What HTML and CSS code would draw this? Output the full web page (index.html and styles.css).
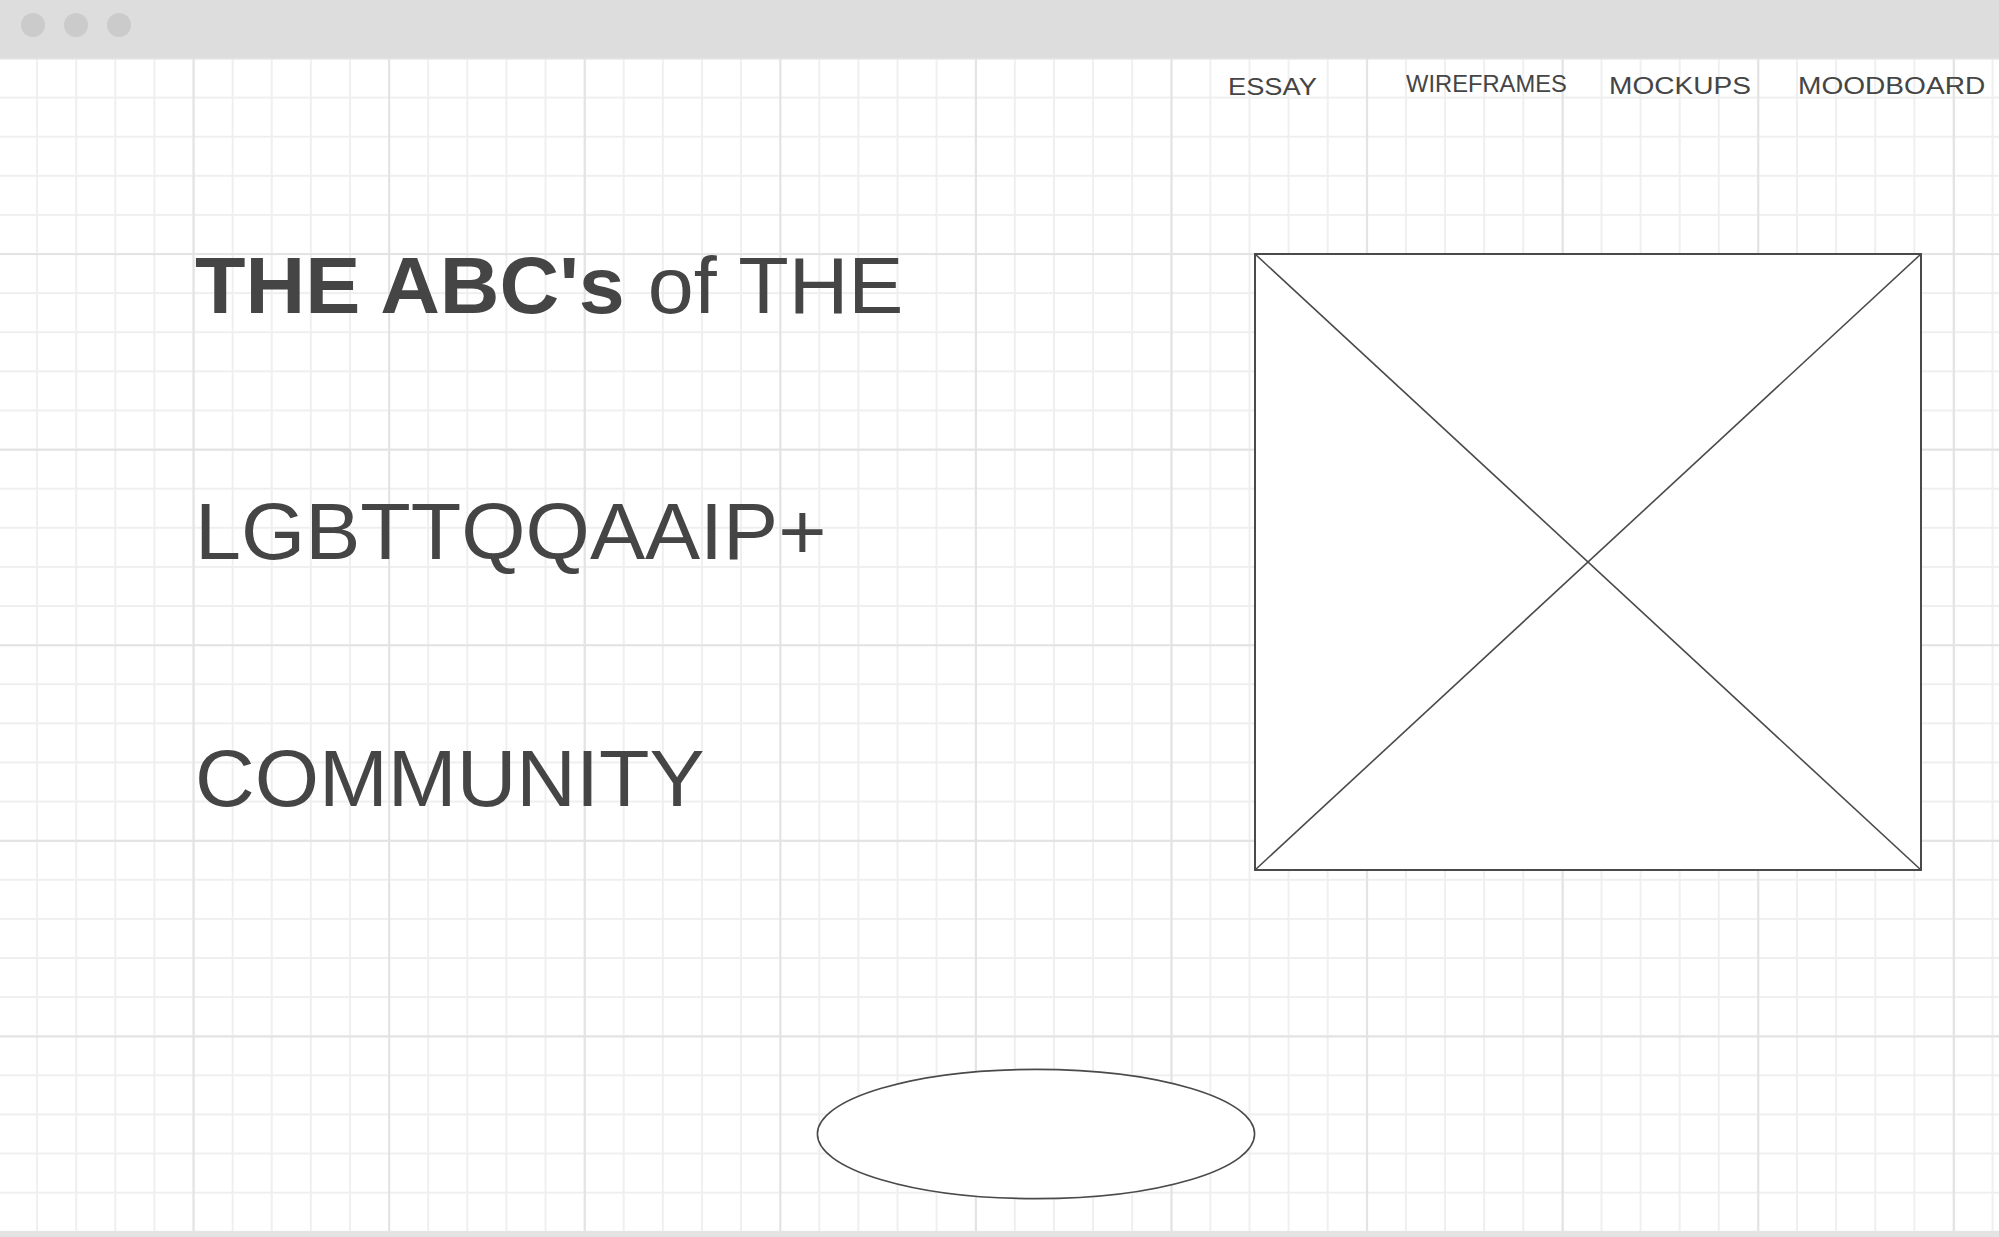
FILE: index.html
```html
<!DOCTYPE html>
<html lang="en">

<head>
    <meta charset="UTF-8">
    <meta name="viewport" content="width=device-width, initial-scale=1.0">
    <title>The ABC's - wireframe</title>
    <link rel="stylesheet" href="styles.css">
</head>

<body>
    <div class="window-bar">
        <span class="dot"></span>
        <span class="dot"></span>
        <span class="dot"></span>
    </div>

    <div class="canvas">
        <nav class="nav">
            <a class="nav-item essay">ESSAY</a>
            <a class="nav-item wireframes">WIREFRAMES</a>
            <a class="nav-item mockups">MOCKUPS</a>
            <a class="nav-item moodboard">MOODBOARD</a>
        </nav>

        <section class="hero">
            <div class="hero-text">
                <p class="line"><strong>THE ABC's</strong> of THE</p>
                <p class="line">LGBTTQQAAIP+</p>
                <p class="line">COMMUNITY</p>
            </div>

            <!-- image placeholder -->
            <svg class="placeholder" viewBox="0 0 668 618" preserveAspectRatio="none">
                <rect x="1" y="1" width="666" height="616" fill="#fff" stroke="#4a4a4a" stroke-width="2" />
                <line x1="1" y1="1" x2="667" y2="617" stroke="#4a4a4a" stroke-width="1.6" />
                <line x1="667" y1="1" x2="1" y2="617" stroke="#4a4a4a" stroke-width="1.6" />
            </svg>
        </section>

        <div class="button-row">
            <svg class="oval" viewBox="0 0 440 132">
                <ellipse cx="220" cy="66" rx="218.6" ry="64.6" fill="#fff" stroke="#4a4a4a" stroke-width="1.6" />
            </svg>
        </div>
    </div>

    <div class="bottom-edge"></div>
</body>

</html>
```

FILE: styles.css
```css
body {
    margin: 0;
    padding: 0;
    height: 1237px;
    display: flex;
    flex-direction: column;
    overflow: hidden;
    background-color: #fff;
    color: #454545;
    font-family: 'Liberation Sans', Arial, sans-serif;
}

.window-bar {
    height: 58px;
    flex: none;
    box-sizing: border-box;
    padding: 13px 0 0 21px;
    display: flex;
    gap: 19px;
    background-color: #dddddd;
}

.dot {
    width: 24px;
    height: 24px;
    border-radius: 50%;
    background-color: #cbcbcb;
}

.canvas {
    flex: 1;
    overflow: hidden;
    background-color: #fff;
    background-image:
        linear-gradient(to right, #e3e3e3 2px, transparent 2px),
        linear-gradient(to bottom, #e3e3e3 2px, transparent 2px),
        linear-gradient(to right, #efefef 2px, transparent 2px),
        linear-gradient(to bottom, #efefef 2px, transparent 2px);
    background-size:
        195.6px 100%,
        100% 195.6px,
        39.12px 100%,
        100% 39.12px;
    background-position:
        -3px 0,
        0 -0.5px,
        -3px 0,
        0 -0.5px;
}

/* top nav */

.nav {
    height: 42px;
    box-sizing: border-box;
    padding: 15px 0 0 1228px;
    display: flex;
    align-items: flex-start;
}

.nav-item {
    display: block;
    line-height: 1;
    font-size: 24px;
    white-space: nowrap;
    transform-origin: left center;
    color: #454545;
    cursor: pointer;
}

.essay {
    font-size: 23.5px;
    margin-top: 3px;
    transform: scaleX(1.16);
}

.wireframes {
    font-size: 23.5px;
    margin-left: 101px;
    transform: scaleX(1.01);
}

.mockups {
    margin-top: 1px;
    margin-left: 44px;
    transform: scaleX(1.17);
}

.moodboard {
    margin-top: 1px;
    margin-left: 68px;
    transform: scaleX(1.17);
}

/* title + placeholder */

.hero {
    display: flex;
    align-items: flex-start;
}

.hero-text {
    flex: none;
    width: 1254px;
    box-sizing: border-box;
    padding: 63px 0 0 195px;
}

.line {
    margin: 0;
    height: 246.4px;
    line-height: 246.4px;
    font-size: 80px;
    white-space: nowrap;
    transform: scaleX(1.033);
    transform-origin: left center;
}

.line strong {
    font-weight: bold;
}

.placeholder {
    flex: none;
    display: block;
    width: 668px;
    height: 618px;
    margin-top: 153px;
}

/* oval button */

.button-row {
    padding: 166px 0 0 816px;
}

.oval {
    display: block;
    width: 440px;
    height: 132px;
}

.bottom-edge {
    height: 6px;
    flex: none;
    background-color: #e4e4e4;
}
```
